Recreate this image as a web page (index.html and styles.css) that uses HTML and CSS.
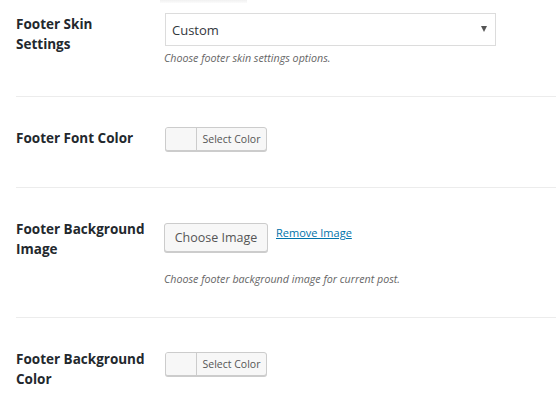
FILE: index.html
```html
<!DOCTYPE html>
<html>
<head>
<meta charset="utf-8">
<link rel="stylesheet" href="styles.css">
</head>
<body>
<div class="page">
  <div class="top-shadow"></div>
  <div class="row row-skin">
    <div class="label">Footer Skin<br>Settings</div>
    <div class="field">
      <div class="select">
        <span class="select-value">Custom</span>
        <span class="select-arrow"></span>
      </div>
      <p class="desc desc-skin">Choose footer skin settings options.</p>
    </div>
  </div>
  <div class="row row-font">
    <div class="label">Footer Font Color</div>
    <div class="field">
      <div class="color-btn"><span class="swatch"></span><span class="color-text">Select Color</span></div>
    </div>
  </div>
  <div class="row row-image">
    <div class="label">Footer Background<br>Image</div>
    <div class="field">
      <div class="image-actions">
        <button class="choose-btn">Choose Image</button>
        <a class="remove-link" href="#">Remove Image</a>
      </div>
      <p class="desc desc-image">Choose footer background image for current post.</p>
    </div>
  </div>
  <div class="row row-bg">
    <div class="label">Footer Background<br>Color</div>
    <div class="field">
      <div class="color-btn"><span class="swatch"></span><span class="color-text">Select Color</span></div>
    </div>
  </div>
</div>
</body>
</html>
```
FILE: styles.css
```css
html, body {
  margin: 0;
  padding: 0;
  background: #fff;
}
body {
  font-family: "Open Sans", "Noto Sans", sans-serif;
  color: #23282d;
  overflow: hidden;
}
.page {
  padding-left: 16px;
}
.top-shadow {
  margin-left: 144px;
  width: 87px;
  height: 3px;
  background: linear-gradient(#f1f1f1, #fbfbfb);
}
.row {
  display: flex;
  border-bottom: 1px solid #ececec;
}
.row-bg {
  border-bottom: none;
}
.label {
  width: 148px;
  flex: none;
  font-size: 13.5px;
  font-weight: 700;
  line-height: 20px;
  color: #23282d;
  padding-top: 31px;
}
.field {
  flex: 1;
}
.row-skin { padding-bottom: 30px; }
.row-skin .label { padding-top: 11px; }
.row-skin .field { padding-top: 10px; }
.row-font { padding-bottom: 36px; }
.row-font .field { padding-top: 30px; }
.row-image { padding-bottom: 30px; }
.row-image .field { padding-top: 35px; }
.row-bg { padding-bottom: 22px; }
.row-bg .field { padding-top: 34px; }

.select {
  box-sizing: border-box;
  margin-left: 1px;
  width: 331px;
  height: 33px;
  border: 1px solid #dcdcdc;
  display: flex;
  align-items: center;
  justify-content: space-between;
  padding: 0 8px 0 6px;
  background: #fff;
}
.select-value {
  font-size: 13px;
  color: #32373c;
}
.select-arrow {
  width: 0;
  height: 0;
  border-left: 3.5px solid transparent;
  border-right: 3.5px solid transparent;
  border-top: 6px solid #555;
  margin-top: -2px;
}
.desc {
  margin: 4px 0 0 0;
  font-size: 10.7px;
  line-height: 16px;
  font-style: italic;
  color: #666;
}
.desc-image {
  margin-top: 19px;
}
.color-btn {
  box-sizing: border-box;
  margin-left: 1px;
  width: 102px;
  height: 24px;
  display: flex;
  border: 1px solid #ccc;
  border-radius: 3px;
  background: #f7f7f7;
  box-shadow: 0 1px 0 #ccc;
  overflow: hidden;
}
.swatch {
  width: 30px;
  flex: none;
  border-right: 1px solid #ccc;
  background: #f7f7f7;
}
.color-text {
  flex: 1;
  font-size: 10.5px;
  line-height: 22px;
  color: #555;
  text-align: center;
}
.image-actions {
  display: flex;
  align-items: flex-start;
}
.choose-btn {
  box-sizing: border-box;
  width: 104px;
  height: 29px;
  border: 1px solid #ccc;
  border-radius: 3px;
  background: #f7f7f7;
  box-shadow: 0 1px 0 #ccc;
  font-family: "Open Sans", "Noto Sans", sans-serif;
  font-size: 12.5px;
  color: #555;
  padding: 0;
}
.remove-link {
  margin-left: 8px;
  margin-top: 2px;
  font-size: 11px;
  line-height: 16px;
  color: #0073aa;
  text-decoration: underline;
}
```
